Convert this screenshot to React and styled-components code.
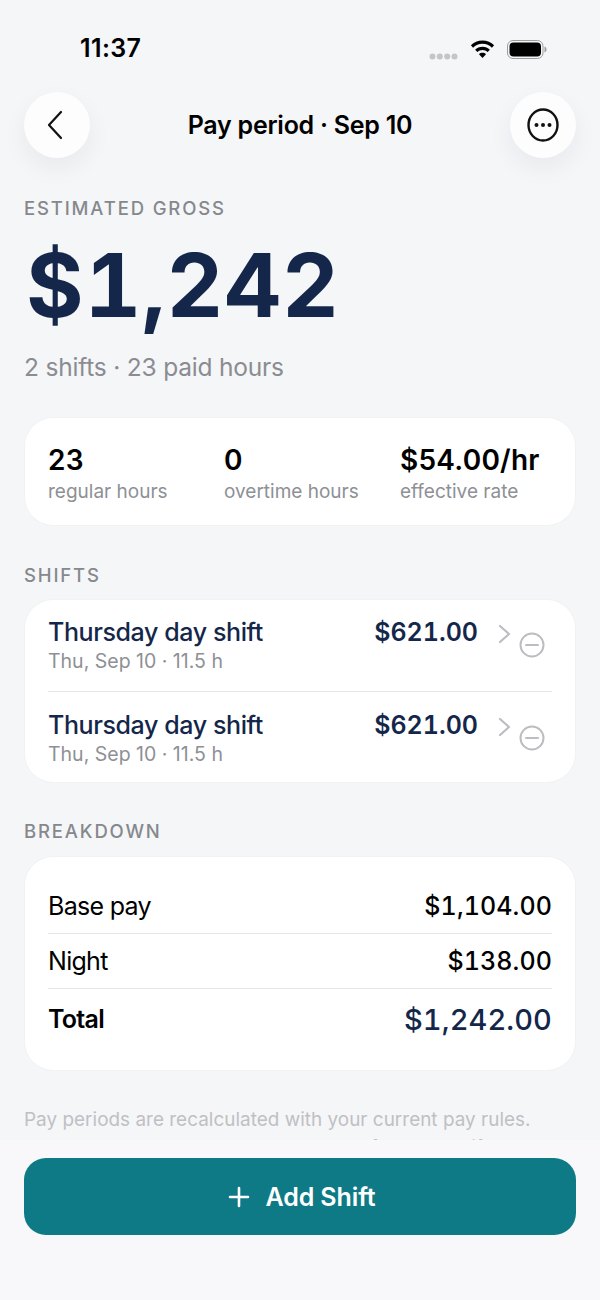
import React from "react";
import styled, { createGlobalStyle } from "styled-components";

const Global = createGlobalStyle`
  html, body { margin: 0; padding: 0; background: #f5f6f8; }
  * { box-sizing: border-box; }
`;

const Screen = styled.div`
  position: relative;
  width: 600px;
  height: 1300px;
  overflow: hidden;
  background: #f5f6f8;
  font-family: Inter, "Liberation Sans", sans-serif;
  color: #000;
`;

const StatusBar = styled.div`
  height: 92px;
  padding: 32px 53px 0 80px;
  display: flex;
  justify-content: space-between;
  align-items: flex-start;
`;

const Time = styled.div`
  font-size: 25px;
  line-height: 32px;
  font-weight: 600;
  letter-spacing: 0.4px;
`;

const StatusIcons = styled.div`
  display: flex;
  align-items: center;
  gap: 12px;
  padding-top: 7px;
`;

const Dots = styled.svg`
  margin-top: 14px;
`;

const Nav = styled.div`
  display: flex;
  justify-content: space-between;
  align-items: center;
  padding: 0 24px;
  height: 66px;
`;

const RoundButton = styled.div`
  width: 66px;
  height: 66px;
  border-radius: 50%;
  background: #fdfdfe;
  box-shadow: 0 10px 24px rgba(20, 30, 50, 0.06);
  display: flex;
  align-items: center;
  justify-content: center;
`;

const BackIcon = styled.svg`
  margin-right: 5px;
`;

const NavTitle = styled.div`
  font-size: 25px;
  font-weight: 600;
  letter-spacing: -0.25px;
`;

const Content = styled.div`
  padding: 38px 24px 0;
`;

const SectionLabel = styled.div`
  font-size: 18.5px;
  line-height: 24px;
  font-weight: 500;
  letter-spacing: 1.85px;
  color: #85888d;
`;

const Amount = styled.div`
  margin: 9px 0 0 2px;
  font-size: 88px;
  line-height: 112px;
  font-weight: 700;
  color: #14274a;
  letter-spacing: 0.8px;
  font-variant-numeric: tabular-nums;
`;

const Sub = styled.div`
  margin-top: 10px;
  font-size: 24.5px;
  line-height: 32px;
  color: #8a8c91;
  letter-spacing: -0.2px;
`;

const Card = styled.div`
  margin-left: 1px;
  width: 550px;
  background: #fff;
  border-radius: 28px;
  box-shadow: 0 0 0 1px #f1f2f4;
`;

const StatsCard = styled(Card)`
  margin-top: 35px;
  height: 107px;
  padding: 25px 23px 0;
  display: grid;
  grid-template-columns: 176px 176px 1fr;
`;

const StatValue = styled.div`
  font-size: 28px;
  line-height: 34px;
  font-weight: 600;
  letter-spacing: 0.25px;
`;

const StatLabel = styled.div`
  margin-top: 3px;
  font-size: 19px;
  line-height: 24px;
  color: #8e9095;
`;

const Heading = styled(SectionLabel)`
  margin-top: ${(p) => p.$top}px;
`;

const ShiftsCard = styled(Card)`
  margin-top: 13px;
  padding: 0 23px;
`;

const ShiftRow = styled.div`
  height: ${(p) => p.$h}px;
  display: flex;
  padding-top: ${(p) => p.$pad}px;
  border-bottom: ${(p) => (p.$line ? "1px solid #e4e5e7" : "none")};
`;

const ShiftText = styled.div`
  flex: 1;
`;

const ShiftTitle = styled.div`
  font-size: 25px;
  line-height: 32px;
  font-weight: 500;
  color: #14274a;
  letter-spacing: -0.4px;
`;

const ShiftMeta = styled.div`
  font-size: 19.5px;
  line-height: 26px;
  color: #8e9095;
`;

const ShiftAmount = styled.div`
  font-size: 25px;
  line-height: 32px;
  font-weight: 600;
  color: #14274a;
  letter-spacing: 0;
  font-variant-numeric: tabular-nums;
`;

const ShiftIcons = styled.div`
  width: 74px;
  flex: none;
  position: relative;
  padding: 8px 0 0 20px;
`;

const RemoveIcon = styled.svg`
  position: absolute;
  left: 41px;
  top: 16px;
`;

const BreakdownCard = styled(Card)`
  margin-top: 14px;
  height: 213px;
  padding: 22px 23px 0;
`;

const BreakRow = styled.div`
  height: ${(p) => p.$h}px;
  display: flex;
  justify-content: space-between;
  align-items: center;
  border-bottom: ${(p) => (p.$line ? "1px solid #e4e5e7" : "none")};
`;

const BreakLabel = styled.div`
  font-size: 25px;
  font-weight: ${(p) => (p.$strong ? 600 : 400)};
  letter-spacing: -0.7px;
`;

const BreakValue = styled.div`
  font-size: ${(p) => (p.$total ? 29 : 25)}px;
  font-weight: 500;
  color: ${(p) => (p.$total ? "#14274a" : "#000")};
  letter-spacing: 0.1px;
  font-variant-numeric: tabular-nums;
`;

const Note = styled.div`
  margin-top: 36px;
  font-size: 18.9px;
  line-height: 28px;
  letter-spacing: 0.03px;
  color: #bfc0c4;
`;

const Footer = styled.div`
  position: absolute;
  left: 0;
  right: 0;
  bottom: 0;
  height: 160px;
  padding: 18px 24px 0;
  background: #f8f8fa;
`;

const AddButton = styled.div`
  height: 77px;
  padding-left: 4px;
  border-radius: 22px;
  background: #0e7a85;
  color: #fff;
  display: flex;
  align-items: center;
  justify-content: center;
  gap: 15px;
  font-size: 25px;
  font-weight: 600;
  letter-spacing: -0.1px;
`;

const Chevron = () => (
  <svg width="14" height="20" viewBox="0 0 14 20" fill="none" stroke="#bcbdc0" strokeWidth="2.2" strokeLinecap="round" strokeLinejoin="round">
    <path d="M2 2l9 8-9 8" />
  </svg>
);

const Shift = ({ line, h, pad }) => (
  <ShiftRow $line={line} $h={h} $pad={pad}>
    <ShiftText>
      <ShiftTitle>Thursday day shift</ShiftTitle>
      <ShiftMeta>Thu, Sep 10 · 11.5 h</ShiftMeta>
    </ShiftText>
    <ShiftAmount>$621.00</ShiftAmount>
    <ShiftIcons>
      <Chevron />
      <RemoveIcon width="26" height="26" viewBox="0 0 26 26" fill="none" stroke="#bcbdc0" strokeWidth="2">
        <circle cx="13" cy="13" r="11.5" />
        <path d="M7 13h12" strokeLinecap="round" />
      </RemoveIcon>
    </ShiftIcons>
  </ShiftRow>
);

export default function App() {
  return (
    <Screen>
      <Global />
      <StatusBar>
        <Time>11:37</Time>
        <StatusIcons>
          <Dots width="29" height="7" viewBox="0 0 29 7" fill="#c4c5c8">
            <circle cx="3.5" cy="3.5" r="3" /><circle cx="10.8" cy="3.500" r="3" /><circle cx="18.200" cy="3.500" r="3" /><circle cx="25.500" cy="3.500" r="3" />
          </Dots>
          <svg width="25" height="19" viewBox="0 0 24 19" fill="#000">
            <path d="M12 0.5c4.6 0 8.7 1.8 11.6 4.8l-2.2 2.4C19 5.200 15.700 3.800 12 3.800S5 5.200 2.600 7.700L.4 5.300C3.300 2.300 7.400.5 12 .5z" />
            <path d="M12 6.700c2.900 0 5.500 1.100 7.400 3l-2.300 2.400C15.800 10.800 14 10.100 12 10.100s-3.800.7-5.100 2L4.600 9.700c1.900-1.900 4.500-3 7.400-3z" />
            <path d="M12 12.800c1.400 0 2.600.5 3.500 1.400L12 18l-3.500-3.800c.9-.9 2.100-1.400 3.500-1.400z" />
          </svg>
          <svg width="40" height="19" viewBox="0 0 40 19" fill="none">
            <rect x="0.5" y="0.500" width="35.500" height="18" rx="5.500" stroke="#9c9da0" />
            <rect x="2.500" y="2.500" width="31.500" height="14" rx="4" fill="#000" />
            <path d="M37.500 6.500c1.300.4 2 1.600 2 3s-.7 2.600-2 3z" fill="#9c9da0" />
          </svg>
        </StatusIcons>
      </StatusBar>

      <Nav>
        <RoundButton>
          <BackIcon width="18" height="30" viewBox="0 0 18 30" fill="none" stroke="#111" strokeWidth="2.200" strokeLinecap="round" strokeLinejoin="round">
            <path d="M15 2L3 15l12 13" />
          </BackIcon>
        </RoundButton>
        <NavTitle>Pay period · Sep 10</NavTitle>
        <RoundButton>
          <svg width="32" height="34" viewBox="0 0 32 34" fill="none">
            <ellipse cx="16" cy="17" rx="14.500" ry="15.500" stroke="#111" strokeWidth="2.400" />
            <circle cx="9.500" cy="17" r="2" fill="#111" /><circle cx="16" cy="17" r="2" fill="#111" /><circle cx="22.500" cy="17" r="2" fill="#111" />
          </svg>
        </RoundButton>
      </Nav>

      <Content>
        <SectionLabel>ESTIMATED GROSS</SectionLabel>
        <Amount>$1,242</Amount>
        <Sub>2 shifts · 23 paid hours</Sub>

        <StatsCard>
          <div><StatValue>23</StatValue><StatLabel>regular hours</StatLabel></div>
          <div><StatValue>0</StatValue><StatLabel>overtime hours</StatLabel></div>
          <div><StatValue>$54.00/hr</StatValue><StatLabel>effective rate</StatLabel></div>
        </StatsCard>

        <Heading $top={38}>SHIFTS</Heading>
        <ShiftsCard>
          <Shift line h={92} pad={16} />
          <Shift h={90} pad={17} />
        </ShiftsCard>

        <Heading $top={37}>BREAKDOWN</Heading>
        <BreakdownCard>
          <BreakRow $line $h={55}><BreakLabel>Base pay</BreakLabel><BreakValue>$1,104.00</BreakValue></BreakRow>
          <BreakRow $line $h={55}><BreakLabel>Night</BreakLabel><BreakValue>$138.00</BreakValue></BreakRow>
          <BreakRow $h={60}><BreakLabel $strong>Total</BreakLabel><BreakValue $total>$1,242.00</BreakValue></BreakRow>
        </BreakdownCard>

        <Note>Pay periods are recalculated with your current pay rules. Worked hours stay as you saved them for each shift.</Note>
      </Content>

      <Footer>
        <AddButton>
          <svg width="22" height="22" viewBox="0 0 22 22" stroke="#fff" strokeWidth="2.600" strokeLinecap="round">
            <path d="M11 2v18M2 11h18" />
          </svg>
          Add Shift
        </AddButton>
      </Footer>
    </Screen>
  );
}
